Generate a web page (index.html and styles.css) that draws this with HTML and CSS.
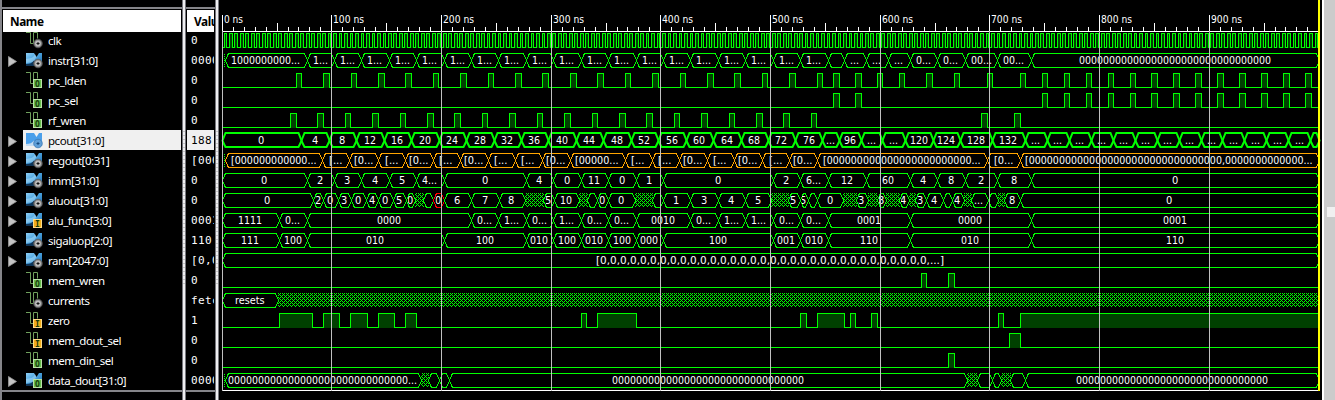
FILE: index.html
```html
<!DOCTYPE html>
<html lang="en">
<head>
<meta charset="utf-8">
<title>Waveform viewer</title>
<link rel="stylesheet" href="styles.css">
</head>
<body>
<svg class="defs" width="0" height="0" aria-hidden="true">
  <defs>
    <pattern id="hatch" width="4" height="4" patternUnits="userSpaceOnUse">
      <path d="M0 0h1v1h-1zM1 1h1v1h-1zM3 1h1v1h-1zM2 2h1v1h-1zM1 3h1v1h-1zM3 3h1v1h-1z" fill="#00ff00"/>
    </pattern>
    <linearGradient id="blue" x1="0" y1="0" x2="1" y2="1">
      <stop offset="0" stop-color="#8fd0f6"/><stop offset=".45" stop-color="#4aa3df"/><stop offset="1" stop-color="#1a6aae"/>
    </linearGradient>
    <symbol id="i-bit" viewBox="0 0 17 20">
      <path d="M0 2.500h4.500v11h3v-11h4v6" fill="none" stroke="#6f9f5c"/>
    </symbol>
    <symbol id="i-bus" viewBox="0 0 17 20">
      <path d="M0 3h8l2.500 4L13 3h3v13H0z" fill="url(#blue)"/>
      <path d="M0 9c4-1 7 0 9-5l1.500 3L7 12l-7 1z" fill="#bfe6fb" opacity=".45"/>
      <path d="M0 14c4 0 6-1 8-3.500l3 5.500H0z" fill="#0e3558"/>
    </symbol>
    <symbol id="i-bus-on" viewBox="0 0 17 20">
      <path d="M0 3h8l2.500 4L13 3h3v13H0z" fill="#4a9fea"/>
      <path d="M0 14c4 0 6-1 8-3.500l3 5.500H0z" fill="#c3dcf3"/>
    </symbol>
    <symbol id="b-int" viewBox="0 0 17 20">
      <circle cx="12" cy="13.500" r="4.300" fill="#858585" stroke="#555" stroke-width=".8"/>
      <circle cx="12" cy="13.500" r="2.900" fill="#bdbdbd"/>
      <path d="M10.500 13.500h3M12 12v3" stroke="#111"/>
    </symbol>
    <symbol id="b-int-on" viewBox="0 0 17 20">
      <circle cx="12" cy="13.500" r="4.300" fill="#5f9fd8" stroke="#3c79b4" stroke-width=".8"/>
      <path d="M10.500 13.500h3M12 12v3" stroke="#174b80"/>
    </symbol>
    <symbol id="b-out" viewBox="0 0 17 20">
      <rect x="7.500" y="9.500" width="8" height="8" fill="#67bd4c" stroke="#b9e2a8"/>
      <text x="11.500" y="16.500" text-anchor="middle" class="badge">O</text>
    </symbol>
    <symbol id="b-in" viewBox="0 0 17 20">
      <rect x="7.500" y="9.500" width="8" height="8" fill="#f2ae1c" stroke="#fbdc8a"/>
      <text x="11.500" y="16.500" text-anchor="middle" class="badge">I</text>
    </symbol>
  </defs>
</svg>
<main class="viewer">
  <section class="pane names"><div class="head">Name</div><div class="rows" id="names"></div></section>
  <div class="splitter"></div>
  <section class="pane values"><div class="head">Value</div><div class="rows" id="values"></div></section>
  <div class="splitter"></div>
  <section class="waves"><div id="ruler"></div><div id="lanes"></div><div class="overlay" id="overlay"></div></section>
  <div class="edge"></div>
  <aside class="side"><div class="handle"></div></aside>
</main>
<script src="waves.js"></script>
</body>
</html>
```
FILE: styles.css
```css
* { box-sizing: border-box; }
body { margin: 0; background: #000; overflow: hidden; }
.defs { position: absolute; }
.viewer { display: flex; width: 1335px; height: 400px; }
.pane {
  height: 392px;
  padding-top: 7px;
  overflow: hidden;
  color: #fff;
  background: linear-gradient(#85858a, #85858a) 0 7px / 100% 2px no-repeat #000;
  border-bottom: 2px solid #85858a;
  font: 11.5px/20px "Noto Sans", "Open Sans", sans-serif;
}
.names { width: 182px; height: 400px; border-left: 2px solid #85858a; border-bottom: 0; }
.values { width: 29px; }
.head {
  position: relative;
  z-index: 1;
  height: 25px;
  margin-bottom: -2px;
  padding-left: 7px;
  border: solid transparent;
  border-width: 3px 1px 0;
  background: #fff padding-box;
  color: #000;
  font: bold 11.8px/22px "Noto Sans", "Open Sans", sans-serif;
  letter-spacing: -.4px;
  overflow: hidden;
}
.rows { display: flex; flex-direction: column; }
.names .rows { height: 362px; border-bottom: 2px solid #85858a; }
.name-row { display: flex; align-items: center; height: 20px; flex: none; margin-right: 1px; }
.twist { width: 21px; height: 20px; flex: none; }
.tag { display: flex; flex: 1; height: 20px; padding-left: 3px; gap: 5px; white-space: nowrap; letter-spacing: -.45px; }
.glyph { width: 17px; height: 20px; flex: none; }
.label { padding-top: 1px; height: 20px; line-height: 19px; }
.on { background: #f0f0f0; color: #000; }
.value-row {
  height: 20px;
  flex: none;
  margin: 0 1px;
  padding: 1px 0 0 4px;
  font: 11px/20px "DejaVu Sans Mono", monospace;
  letter-spacing: .38px;
  white-space: pre;
  overflow: hidden;
}
.splitter {
  width: 4px;
  flex: none;
  background:
    repeating-linear-gradient(#c8c8c8 0 1px, transparent 1px 4px) 1px 131px / 2px 153px no-repeat,
    linear-gradient(90deg, #77777d 0 1px, #efeff1 1px 3px, #77777d 3px);
}
.badge { font: bold 8px "DejaVu Sans Mono", monospace; fill: #163c0c; letter-spacing: 0; }
.waves { position: relative; width: 1101px; height: 400px; flex: none; background: #000; }
#ruler { height: 30px; }
#lanes { display: flex; flex-direction: column; }
.waves svg { display: block; overflow: visible; }
.lane { width: 1099px; height: 20px; flex: none; }
.overlay { position: absolute; left: 0; top: 0; }
.wave-text, .wave-text text { font: 11px "DejaVu Sans Condensed", "DejaVu Sans", sans-serif; font-stretch: condensed; fill: #fff; }
.crisp { shape-rendering: crispEdges; }
.edge { width: 4px; flex: none; background: linear-gradient(90deg, #000 0 2px, #fff 2px); }
.side { flex: 1; background: #cbcbcb; padding: 207px 0 0 3px; }
.handle { height: 10px; background: #f0f0f0; }
```
FILE: waves.js
```js
const ORIGIN = 219, START = 222, END = 1318, GREEN = '#00ff00', ORANGE = '#ffa500';
const zeros = n => '0'.repeat(n);

// Pulse trains: start positions with a common width.
const train = (first, step, count, width = 5.6) =>
  Array.from({ length: count }, (_, i) => [first + i * step, first + i * step + width]);
const loop = train(1042.3, 21.93, 13);

// A bus is a list of [start, label, kind]; each segment ends where the next starts.
const bus = (...s) => ({ bus: s });
const bits = (...p) => ({ bits: p });
const edges = [334.3, 361.3, 389.3, 416.5, 444.3, 471.3, 498.5, 526, 553.3, 581.3, 608.7, 636.3, 663.3, 690.7, 718.3, 745.7, 773.3, 800.3];
const pcEdges = [301.7, 329, 356.4, 384, 411.6, 439, 466.4, 494, 521, 548.5, 576, 603.5, 631, 658.5, 686, 713.5, 741, 768.4, 795.7];

const signals = [
  { name: 'clk', icon: 'bit', badge: 'int', value: '0', ...bits(...train(224, 5.483, 200, 2.8)) },
  { name: 'instr[31:0]', icon: 'bus', badge: 'int', value: '0000', lead: 1,
    ...bus([225, '1000000000...'], [307.3, '1...'], ...edges.map(x => [x, '1...']), [828.3, ''], [844.3, '...'], [866.7, '...'],
      [888.3, '...'], [910.3, '0...'], [937.3, '0...'], [965.7, '00...'], [997.7, '00...'], [1031.3, zeros(32)]) },
  { name: 'pc_lden', icon: 'bit', badge: 'out', value: '0',
    ...bits(...train(296.3, 27.41, 20), [833, 839], [855, 861], [877, 882], [899, 904], [926, 932], [954, 959], [987, 992], [1020, 1025], ...loop) },
  { name: 'pc_sel', icon: 'bit', badge: 'out', value: '0', ...bits([833, 839], [855, 861], ...loop) },
  { name: 'rf_wren', icon: 'bit', badge: 'out', value: '0', ...bits(...train(290.5, 27.41, 20), [981, 987], [1014, 1020]) },
  { name: 'pcout[31:0]', icon: 'bus', badge: 'int', value: '188', on: 1,
    ...bus([START, '0'], ...pcEdges.map((x, i) => [x, String(4 * (i + 1))]), [822.7, '...'], [839.7, '96'], [861.7, '...'], [882.7, '...'],
      [905.3, '120'], [933, '124'], [960.3, '128'], [992.3, '132'], [1025.7, '...'],
      ...Array.from({ length: 12 }, (_, i) => [1047.5 + i * 21.93, '...']), [1310.7, '']) },
  { name: 'regout[0:31]', icon: 'bus', badge: 'int', value: '[000', color: ORANGE, lead: 1,
    ...bus([225, '[000000000000...'], [322.7, '[...'], [349.7, '[0...'], [378.3, '[...'], [405.7, '[0...'], [433.3, '[...'], [460.3, '[0...'],
      [488.3, '[...'], [515.3, '[...'], [542.3, '[0...'], [570.3, '[00000...'], [625.3, '[...'], [652.3, '[...'], [679.3, '[0...'],
      [707.3, '[...'], [734.3, '[0...'], [762.7, '[...'], [789, '[0...'], [817.3, '[' + zeros(24) + '...'], [987.3, '[0...'],
      [1020.7, '[' + zeros(32) + ',' + zeros(13) + '...']) },
  { name: 'imm[31:0]', icon: 'bus', badge: 'int', value: '0',
    ...bus([START, '0'], [307.3, '2'], [334.3, '3'], [361.3, '4'], [389.3, '5'], [416.5, '4...'], [444.3, '0'], [526, '4'], [553.3, '0'],
      [581, '11'], [608.7, '0'], [636.3, '1'], [663.3, '0'], [773.3, '2'], [800.3, '6...'], [828.3, '12'], [866.7, '60'], [910.3, '4'],
      [937.3, '8'], [965.7, '2'], [997.7, '8'], [1031.3, '0']) },
  { name: 'aluout[31:0]', icon: 'bus', badge: 'int', value: '0',
    ...bus([START, '0'], [313, '2'], [323.3, '0'], [338, '3'], [351, '0'], [366.3, '4'], [378, '0'], [393.7, '5'], [406, '0'],
      [415, '', 'hatch'], [423.3, ''], [433.5, '0', 'red'], [444.3, '6'], [471.3, '7'], [499, '8'], [525, '', 'hatch'], [543.3, '5'],
      [554, '10'], [579, '', 'hatch'], [587, ''], [597.3, '0'], [608.7, '0'], [635, '', 'hatch'], [652.5, ''], [663.3, '1'],
      [690.7, '3'], [718, '4'], [745.5, '5'], [771, '', 'hatch'], [788, '5'], [800, '5'], [808, ''], [817.5, '0'], [843, '', 'hatch'],
      [856, '3'], [868, '', 'hatch'], [877, '8'], [886, '', 'hatch'], [899, '4'], [909, '', 'hatch'], [915, '3'], [926, '4'],
      [943, ''], [952, '4'], [964, '', 'hatch'], [971, '...'], [988, ''], [998, '', 'hatch'], [1004, '8'], [1020.7, '0']) },
  { name: 'alu_func[3:0]', icon: 'bus', badge: 'in', value: '0001',
    ...bus([START, '1111'], [279.3, '0...'], [307.3, '0000'], [471.3, '0...'], [498.5, '1...'], [526, '0...'], [553.3, '1...'],
      [581, '0...'], [608.7, '0...'], [636.3, '0010'], [690.7, '0...'], [718.3, '1...'], [745.7, '1...'], [773.3, '0...'],
      [800.3, '0...'], [828.3, '0001'], [910.3, '0000'], [1031.3, '0001']) },
  { name: 'sigaluop[2:0]', icon: 'bus', badge: 'int', value: '110',
    ...bus([START, '111'], [279.3, '100'], [307.3, '010'], [444.3, '100'], [526, '010'], [553.3, '100'], [581, '010'], [608.7, '100'],
      [636.3, '000'], [663.3, '100'], [773.3, '001'], [800.3, '010'], [828.3, '110'], [910.3, '010'], [1031.3, '110']) },
  { name: 'ram[2047:0]', icon: 'bus', badge: 'int', value: '[0,0', ...bus([START, '[' + '0,'.repeat(33) + '...]']) },
  { name: 'mem_wren', icon: 'bit', badge: 'out', value: '0', ...bits([921, 926], [948, 954]) },
  { name: 'currents', icon: 'bit', badge: 'int', value: 'fetc', ...bus([START, 'resets'], [278, '', 'hatch']) },
  { name: 'zero', icon: 'bit', badge: 'in', value: '1',
    ...bits([279, 312], [323, 339], [350, 367], [378, 394], [405, 416], [581, 586], [597, 636], [800, 806], [817, 844],
      [850, 855], [871, 877], [998, 1003], [1020, END]) },
  { name: 'mem_dout_sel', icon: 'bit', badge: 'in', value: '0', ...bits([1009, 1020]) },
  { name: 'mem_din_sel', icon: 'bit', badge: 'out', value: '0', ...bits([948, 954]) },
  { name: 'data_dout[31:0]', icon: 'bus', badge: 'out', value: '0000', lead: 1,
    ...bus([225, zeros(30) + '...'], [421, '', 'hatch'], [428, ''], [439, ''], [449.7, zeros(32)], [967.7, '', 'hatch'], [977, ''],
      [992.3, ''], [1001, '', 'hatch'], [1010, ''], [1025.5, zeros(32)]) },
];

const charWidth = { '.': 3, ',': 4, '[': 4.5, ']': 4.5, r: 4, e: 6, s: 4.8, t: 4, n: 6, ' ': 3 };
const textWidth = s => [...s].reduce((w, c) => w + (charWidth[c] ?? 6), 0);
const px = x => Math.floor(x) - ORIGIN + 0.5;

function label(s, a, b) {
  if (!s) return '';
  const w = textWidth(s), x = (a + b) / 2 - ORIGIN - w / 2 - 0.6;
  const left = a - ORIGIN + 2, clip = b - a - 3;
  const fit = s.length > 1 ? ` textLength="${w}" lengthAdjust="spacingAndGlyphs"` : '';
  return `<svg class="wave-text" x="${left}" y="0" width="${clip}" height="20" style="overflow:hidden"><text x="${Math.round(x) - left}" y="14"${fit}>${s}</text></svg>`;
}

function busLane(sig) {
  let out = sig.lead ? `<path d="M${px(222)} 3v15M${px(224)} 4v14" stroke="${GREEN}" stroke-dasharray="1 1"/>` : '';
  sig.bus.forEach(([a, text, kind], i) => {
    const b = i + 1 < sig.bus.length ? sig.bus[i + 1][0] : END + 1;
    const x0 = px(a), x1 = px(b);
    const color = kind === 'red' ? '#ff0000' : sig.color || GREEN;
    if (kind === 'hatch') {
      out += `<path class="crisp" d="M${x0 - .5} 3H${x1 + .5}V17H${x0 - .5}z" fill="url(#hatch)"/>`;
    } else {
      const d = Math.min(3, (x1 - x0) / 2);
      // The selected signal is drawn with a heavier, pixel-aligned outline.
      const top = sig.on ? 3 : 3.5, bottom = sig.on ? 17 : 17.5;
      out += `<path class="${sig.on ? '' : 'crisp'}" d="M${x0} 10.500L${x0 + 1} 8L${x0 + d} ${top}H${x1 - d}L${x1 - 1} 8L${x1} 10.500L${x1 - 1} 13L${x1 - d} ${bottom}H${x0 + d}L${x0 + 1} 13z" fill="none" stroke="${color}" stroke-width="${sig.on ? 2 : 1}"/>`;
    }
    out += label(text, a, b);
  });
  return out;
}

function bitLane(sig) {
  let line = `M${px(START)} 17.500`, fill = '';
  sig.bits.filter(([a]) => a < END - 1).forEach(([a, b]) => {
    const x0 = px(a), x1 = px(b);
    fill += `M${x0} 3.500H${x1}V18H${x0}z`;
    line += `H${x0}V3.500H${x1}` + (b < END ? 'V17.500' : '');
  });
  if (!sig.bits.some(p => p[1] === END)) line += `H${px(END)}`;
  return `<g class="crisp"><path d="${fill}" fill="#004000"/><path d="${line}" fill="none" stroke="${GREEN}"/></g>`;
}

const names = document.getElementById('names');
const values = document.getElementById('values');
const lanes = document.getElementById('lanes');
signals.forEach(s => {
  const on = s.on ? '-on' : '';
  const arrow = s.name.includes('[') ? '<path d="M6.500 6.500v10l8-5z" fill="#c4c4c4" stroke="#999" stroke-width=".8"/>' : '';
  names.insertAdjacentHTML('beforeend', `<div class="name-row"><svg class="twist">${arrow}</svg><div class="tag ${s.on ? 'on' : ''}"><svg class="glyph"><use href="#i-${s.icon}${s.icon === 'bus' ? on : ''}"/><use href="#b-${s.badge}${on}"/></svg><span class="label">${s.name}</span></div></div>`);
  values.insertAdjacentHTML('beforeend', `<div class="value-row ${s.on ? 'on' : ''}">${s.value}</div>`);
  lanes.insertAdjacentHTML('beforeend', `<svg class="lane">${s.bus ? busLane(s) : bitLane(s)}</svg>`);
});

// Time scale, grid and cursor.
let ticks = '', grid = '', marks = '';
for (let t = 0; t < 1000; t += 10) {
  const x = px(START + t * 1.0967 + .2);
  if (t % 100 === 0) {
    ticks += `M${x} 15V31`;
    grid += `M${x} 31V391`;
    marks += `<text x="${x + 1.5}" y="23" textLength="${t ? 31 : 19}" lengthAdjust="spacingAndGlyphs">${t} ns</text>`;
  } else ticks += `M${x} ${t % 50 ? 27 : 23}V31`;
}
document.getElementById('overlay').innerHTML = `<svg class="wave-text" width="1101" height="400"><g class="crisp" fill="none"><path d="${ticks}M3 31.500H1099M3 390.500H1101" stroke="#fff"/><path d="${grid}" stroke="#c0c0c0"/><path d="M1100 0V391" stroke="#ffff00" stroke-width="2"/></g>${marks}</svg>`;
```
